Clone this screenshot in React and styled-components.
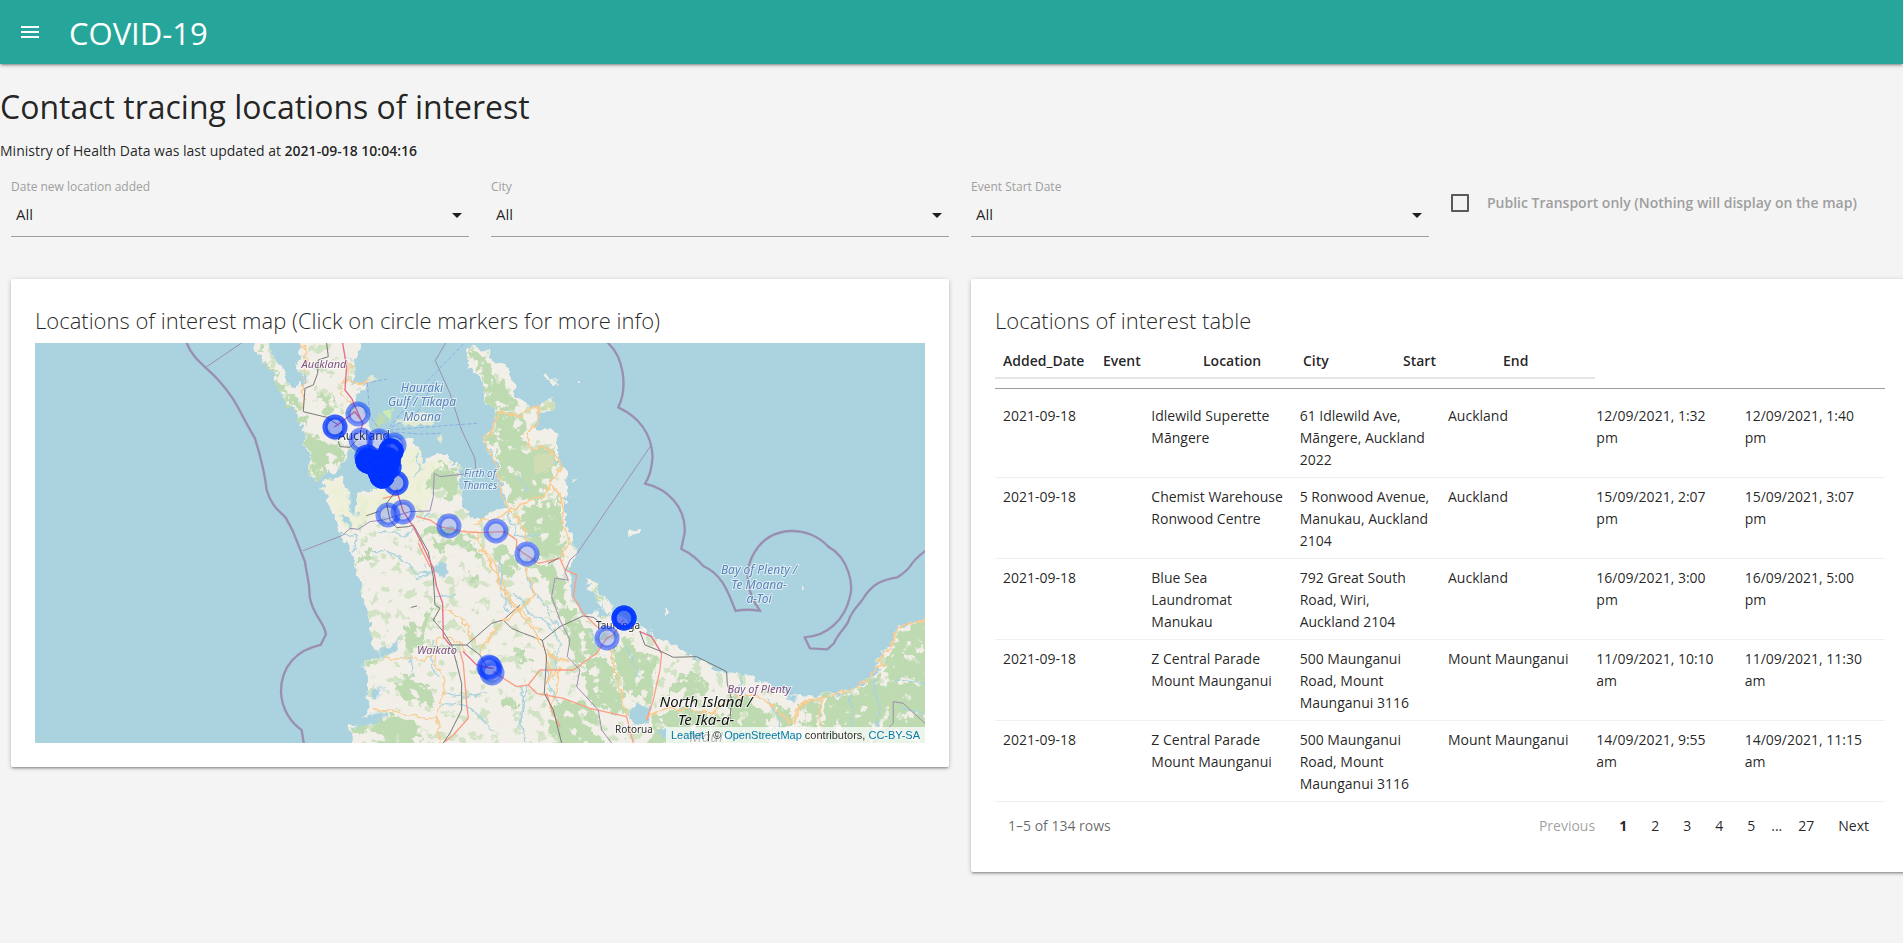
import React from 'react'
import styled, { createGlobalStyle } from 'styled-components';

const GlobalStyle = createGlobalStyle`
* {
box-sizing: border-box;
}
body {
margin: 0;
background: #f4f4f4;
color: rgba(0, 0, 0, 0.87);
font-family: "Segoe UI", "Open Sans", "Noto Sans", sans-serif;
font-size: 14px;
line-height: 22px;
overflow-x: hidden;
}
`
const Nav = styled.nav`
display: flex;
align-items: center;
gap: 27px;
height: 64px;
padding-left: 18px;
background: #26a69a;
color: #fff;
box-shadow: 0 2px 2px 0 rgba(0, 0, 0, 0.14), 0 3px 1px -2px rgba(0, 0, 0, 0.12), 0 1px 5px 0 rgba(0, 0, 0, 0.2);
`
const MenuButton = styled.button`
display: flex;
padding: 0;
border: 0;
background: none;
color: inherit;
cursor: pointer;
`
const Brand = styled.a`
padding-top: 2px;
font-size: 31px;
line-height: 62px;
color: inherit;
text-decoration: none;
`
const Main = styled.main`
padding-bottom: 32px;
`
const PageTitle = styled.h1`
margin: 24px 0 14px;
font-size: 32px;
line-height: 38px;
font-weight: 400;
`
const Updated = styled.p`
margin: 0;
line-height: 22px;
`
const Strong = styled.span`
font-weight: 600;
`
// the grid runs under the scrollbar gutter on the right
const Row = styled.div`
display: grid;
grid-template-columns: repeat(${({ $columns }) => $columns}, minmax(0, 1fr));
align-items: start;
width: calc(100% + 17px);
`
const Column = styled.div`
padding: 0 11px;
`
const Filters = styled(Row)`
margin-top: 17px;
`
const Field = styled.div`
display: flex;
flex-direction: column;
position: relative;
`
const FieldLabel = styled.label`
font-size: 12px;
line-height: 16px;
color: #9e9e9e;
`
const Select = styled.select`
appearance: none;
width: 100%;
height: 42px;
padding: 0 5px 4px;
border: 0;
border-bottom: 1px solid #9e9e9e;
border-radius: 0;
background: transparent;
color: rgba(0, 0, 0, 0.87);
font-family: inherit;
font-size: 15px;
`
const Caret = styled.svg`
position: absolute;
right: 0;
bottom: 10px;
pointer-events: none;
`
const CheckLabel = styled.label`
display: flex;
align-items: center;
gap: 18px;
margin-top: 13px;
font-weight: 600;
color: #9e9e9e;
`
const Checkbox = styled.input`
appearance: none;
flex: none;
width: 18px;
height: 18px;
margin: 0;
border: 2px solid #5a5a5a;
border-radius: 1px;
`
const Cards = styled(Row)`
margin-top: 42px;
`
const Card = styled.section`
padding: 24px;
border-radius: 2px;
background: #fff;
box-shadow: 0 2px 2px 0 rgba(0, 0, 0, 0.14), 0 3px 1px -2px rgba(0, 0, 0, 0.12), 0 1px 5px 0 rgba(0, 0, 0, 0.2);
`
const CardTitle = styled.h2`
margin: 0;
padding-bottom: 6px;
font-size: 22px;
line-height: 34px;
font-weight: 300;
`
const MapBox = styled.div`
position: relative;
height: 400px;
overflow: hidden;
background: #aad3df;
`
const MapDrawing = styled.svg`
display: block;
width: 100%;
height: 100%;
`
const MapLabel = styled.text`
font-family: "Noto Sans", sans-serif;
font-size: ${({ $size }) => $size || 11}px;
font-style: ${({ $upright }) => ($upright ? 'normal' : 'italic')};
text-anchor: middle;
fill: ${({ $color }) => $color};
stroke: rgba(255, 255, 255, 0.6);
stroke-width: 2px;
paint-order: stroke;
`
const Attribution = styled.div`
position: absolute;
right: 0;
bottom: 0;
padding: 0 5px;
background: rgba(255, 255, 255, 0.7);
color: #333;
font-family: "Liberation Sans", Arial, sans-serif;
font-size: 11px;
line-height: 16px;
`
const AttributionLink = styled.a`
color: #0078a8;
text-decoration: none;
`
const Table = styled.table`
display: block;
width: 100%;
`
const Head = styled.thead`
display: block;
padding-bottom: 9px;
margin-bottom: 8px;
border-bottom: 1px solid #9e9e9e;
`
const HeadRow = styled.tr`
display: grid;
grid-template-columns: repeat(6, 100px);
width: 600px;
border-bottom: 2px solid rgba(0, 0, 0, 0.1);
`
const HeadCell = styled.th`
padding: 7px 0 5px 8px;
text-align: left;
font-weight: 600;
line-height: 22px;
`
const Body = styled.tbody`
display: block;
`
const BodyRow = styled.tr`
display: grid;
grid-template-columns: repeat(6, minmax(0, 1fr));
border-bottom: 1px solid rgba(0, 0, 0, 0.06);
`
const Cell = styled.td`
padding: 8px 8px 6px;
`
const Pager = styled.div`
display: flex;
align-items: center;
justify-content: space-between;
padding: 9px 4px 7px 13px;
`
const PagerInfo = styled.div`
color: rgba(0, 0, 0, 0.6);
`
const Pages = styled.div`
display: flex;
align-items: center;
`
const PageButton = styled.button`
padding: 4px 12px;
border: 0;
background: none;
color: inherit;
font-family: inherit;
font-size: 14px;
line-height: 22px;
font-weight: ${({ $current }) => ($current ? 700 : 400)};
cursor: pointer;
&:disabled {
color: rgba(0, 0, 0, 0.4);
cursor: default;
}
`
const Ellipsis = styled.span`
padding: 0 4px;
`

const filters = [
    { id: 'added', label: 'Date new location added' },
    { id: 'city', label: 'City' },
    { id: 'start', label: 'Event Start Date' },
]

const columns = ['Added_Date', 'Event', 'Location', 'City', 'Start', 'End']

const rows = [
    ['2021-09-18', 'Idlewild Superette Māngere', '61 Idlewild Ave, Māngere, Auckland 2022', 'Auckland', '12/09/2021, 1:32 pm', '12/09/2021, 1:40 pm'],
    ['2021-09-18', 'Chemist Warehouse Ronwood Centre', '5 Ronwood Avenue, Manukau, Auckland 2104', 'Auckland', '15/09/2021, 2:07 pm', '15/09/2021, 3:07 pm'],
    ['2021-09-18', 'Blue Sea Laundromat Manukau', '792 Great South Road, Wiri, Auckland 2104', 'Auckland', '16/09/2021, 3:00 pm', '16/09/2021, 5:00 pm'],
    ['2021-09-18', 'Z Central Parade Mount Maunganui', '500 Maunganui Road, Mount Maunganui 3116', 'Mount Maunganui', '11/09/2021, 10:10 am', '11/09/2021, 11:30 am'],
    ['2021-09-18', 'Z Central Parade Mount Maunganui', '500 Maunganui Road, Mount Maunganui 3116', 'Mount Maunganui', '14/09/2021, 9:55 am', '14/09/2021, 11:15 am'],
]

// x, y and how many events share the spot
const markers = [
    [323, 71, 1], [300, 84, 2], [326, 97, 1], [344, 98, 1], [359, 102, 1], [332, 114, 2],
    [356, 108, 6], [353, 117, 8], [346, 119, 8], [333, 118, 8], [338, 120, 8], [354, 124, 3], [350, 126, 8],
    [347, 133, 8], [345, 128, 8], [361, 140, 2], [353, 172, 1], [368, 169, 1], [414, 183, 1],
    [461, 188, 1], [492, 211, 1], [589, 275, 4], [572, 295, 1], [454, 324, 1], [455, 325, 1], [457, 330, 1],
]

const purple = '#7d4f80'
const blue = '#5a82ba'
const labels = [
    [289, 25, 'Auckland', purple, 11],
    [387, 49, 'Hauraki', blue, 12],
    [387, 63, 'Gulf / Tīkapa', blue, 12],
    [387, 78, 'Moana', blue, 12],
    [445, 134, 'Firth of', blue, 10],
    [445, 146, 'Thames', blue, 10],
    [402, 311, 'Waikato', purple, 11],
    [724, 231, 'Bay of Plenty /', blue, 12],
    [724, 246, 'Te Moana-', blue, 12],
    [724, 260, 'a-Toi', blue, 12],
    [724, 350, 'Bay of Plenty', purple, 11],
    [671, 364, 'North Island /', '#111', 15],
    [671, 382, 'Te Ika-a-', '#111', 15],
    [671, 399, 'Māui', '#111', 15],
    [329, 97, 'Auckland', '#333', 12, true],
    [583, 286, 'Tauranga', '#333', 10, true],
    [599, 390, 'Rotorua', '#333', 10, true],
]

const westLand = [
    'M705 20 L703 60 720 85 745 120 775 165 805 215 835 265 845 295 855 350 868 390 875 440 890 447 915 432 925 420 945 428 960 405 985 375 1005 362 1040 380 1090 440 1100 470 1060 475 1035 480 1012 495 1005 545 985 500 970 460 960 445 920 448 905 455 915 490 935 530 950 570 968 610 985 650 1000 690 1005 720 1020 770 1035 820 1042 855 1055 900 1065 945 1068 965 1085 975 1060 980 1030 990 1028 1010 1040 1040 1045 1080 1040 1110 1045 1150 1020 1180 985 1183 990 1210 1005 1260 L1560 1260 1560 560 1480 535 1450 535 1410 555 1370 567 1345 550 1330 520 1320 470 1320 430 1310 400 1290 375 1260 380 1235 375 1220 400 1200 380 1190 345 1175 335 1130 335 1075 320 1060 300 1045 260 1020 230 1000 200 1012 185 1035 170 1065 150 1030 165 1000 150 1000 90 1015 75 1025 20 L833 20 840 60 835 90 850 140 850 168 805 168 800 130 760 75 738 20 Z',
    'M1335 80 L1340 60 1370 54 1400 64 1420 84 1445 99 1470 114 1470 140 1480 250 1420 230 1395 215 1395 190 1400 160 1375 135 1340 95 Z',
]

const eastLand = [
    'M-45 70 L-20 54 20 64 40 84 65 99 90 114 90 139 110 159 110 204 125 214 150 235 180 225 205 210 225 232 195 245 175 260 160 290 200 295 235 310 225 340 240 370 240 400 255 430 262 460 260 500 262 540 255 570 270 610 285 640 290 680 270 720 275 800 290 830 310 855 345 850 375 855 400 845 430 860 480 890 540 925 600 955 640 980 700 1010 740 1025 800 1035 860 1055 900 1080 940 1095 1010 1098 1060 1095 1110 1085 1160 1055 1190 1015 1195 985 1220 955 1240 935 1245 910 1265 885 1300 880 1350 868 1350 1260 -60 1260 -60 590 0 567 30 555 70 535 85 535 78 520 65 490 60 450 55 420 40 380 15 350 8 330 20 310 40 300 45 270 55 245 40 225 15 225 15 200 25 165 15 145 -20 120 -40 95 Z',
    'M315 745 L340 762 380 815 402 845 388 845 360 812 330 780 Z',
    'M345 808 L362 815 375 835 355 835 Z',
    'M550 835 L562 832 555 855 546 858 Z',
    'M200 130 L210 150 230 152 230 165 212 168 205 150 190 140 Z',
    'M452 602 L474 600 470 620 456 624 Z',
    'M965 766 L976 770 970 778 Z',
    'M285 156 L292 156 292 162 285 162 Z',
    'M290 440 L297 446 292 455 Z',
    'M850 1000 L858 1002 856 1006 Z',
]

const westForest = [
    'M706 50 L722 60 745 105 790 165 830 215 848 245 850 290 838 275 800 210 745 125 Z',
    'M850 320 L890 322 920 335 948 345 975 370 960 395 925 410 905 438 882 443 872 400 860 350 Z',
    'M900 195 L940 188 950 215 940 240 920 250 900 232 Z',
    'M1230 430 L1265 400 1310 405 1318 470 1300 510 1265 515 1240 480 1215 465 Z',
    'M1210 595 L1270 590 1330 605 1370 635 1340 650 1300 640 1270 665 1240 640 1215 645 Z',
    'M1340 620 L1380 660 1400 700 1372 700 1350 655 Z',
    'M1030 655 L1070 645 1060 675 1020 700 1000 700 Z',
    'M1245 830 L1250 870 1225 895 1205 930 1225 935 1180 960 1150 945 1165 880 1205 890 1230 850 Z',
    'M1150 1040 L1190 1035 1200 1060 1240 1095 1235 1125 1195 1120 1150 1100 1130 1065 Z',
    'M1060 1180 L1110 1150 1180 1165 1200 1200 1190 1260 1090 1260 1060 1230 Z',
    'M995 1190 L1040 1178 1045 1200 1010 1225 Z',
    'M1345 65 L1375 58 1385 100 1350 90 Z',
    'M1345 735 L1375 730 1380 760 1355 762 Z',
    'M1030 990 L1060 985 1055 1015 1030 1015 Z',
]

const eastForest = [
    'M-30 60 L0 75 35 100 50 140 75 170 105 205 110 240 70 245 20 220 15 190 25 160 -10 115 Z',
    'M55 250 L110 250 140 265 135 310 150 355 195 375 190 440 210 470 170 510 110 520 80 510 62 440 50 370 20 335 25 310 45 300 Z',
    'M155 360 L210 355 235 400 200 450 160 430 Z',
    'M190 215 L215 225 190 238 Z',
    'M120 540 L160 515 215 520 235 490 250 530 245 600 260 640 235 680 190 680 160 640 130 600 Z',
    'M55 650 L85 655 95 690 110 720 90 750 65 740 55 700 Z',
    'M140 690 L200 710 260 750 245 800 290 860 330 900 350 940 330 980 290 1010 270 960 262 900 230 840 215 780 170 740 Z',
    'M325 750 L345 775 375 820 350 800 Z',
    'M300 1010 L350 975 385 990 400 1040 430 1100 440 1150 380 1140 330 1110 300 1060 Z',
    'M210 1120 L270 1110 330 1130 360 1160 350 1200 390 1260 240 1260 210 1190 Z',
    'M400 960 L440 930 480 960 530 985 520 1040 510 1120 480 1100 430 1080 405 1020 Z',
    'M590 1040 L640 1025 680 1050 670 1095 620 1105 570 1090 Z',
    'M520 1170 L600 1130 700 1150 740 1170 735 1260 500 1260 Z',
    'M740 1110 L800 1085 840 1130 880 1200 860 1260 750 1260 Z',
    'M880 1120 L930 1130 940 1180 900 1190 Z',
    'M960 1120 L1010 1110 1015 1200 970 1190 Z',
    'M1030 1105 L1110 1095 1160 1060 1200 1015 1240 955 1250 915 1275 890 1350 875 1350 1260 1035 1260 Z',
    'M100 950 L125 962 148 985 130 1000 105 990 Z',
    'M68 1110 L95 1100 110 1130 90 1142 70 1130 Z',
]

const lakes = [
    'M1255 695 L1285 705 1285 735 1260 740 1245 715 Z',
    'M1215 700 L1225 715 1212 712 Z',
    'M1060 1070 L1085 1070 1080 1095 1060 1110 Z',
    'M1000 1190 L1040 1160 1105 1145 1085 1170 1040 1185 Z',
    'M1070 965 L1110 950 1145 920 1125 965 1095 980 Z',
    'M978 480 L995 470 1005 560 990 540 Z',
    'M965 560 L985 560 1000 600 985 590 Z',
    'M1130 480 L1160 500 1130 470 Z',
]

const eastLakes = [
    'M445 1135 L475 1128 515 1135 510 1165 495 1190 460 1185 445 1165 Z',
    'M600 1130 L640 1125 625 1150 Z',
    'M540 1200 L570 1195 575 1225 545 1230 Z',
    'M930 1095 L955 1100 945 1125 925 1110 Z',
]

const rivers = [
    'M965 610 L1010 620 1000 660 M1070 605 L1110 605 1150 620 1180 600 M1060 665 L1110 665 1150 690 1190 730 1240 725 M1235 725 L1190 750 1180 740',
    'M1245 800 L1310 795 M1240 930 L1235 1000 1250 1040 M1270 1090 L1310 1100 1370 1095 1400 1085 M1270 1120 L1330 1125 1380 1160 1420 1200 M1140 985 L1175 995 1175 1040',
    'M1440 690 L1440 780 1465 850 M1480 790 L1510 810 1525 850 1590 880 1620 950 1600 1020 M1520 1070 L1500 1170 1520 1240',
    'M1190 370 L1200 420 1180 440 M1230 545 L1210 570',
]

const eastRivers = [
    'M85 545 L90 580 115 590 105 620 180 615 M60 680 L65 770 90 830 M130 700 L150 770 200 830 225 880 240 900 M250 370 L225 400 M150 480 L110 440',
    'M200 1010 L210 1080 230 1110 M125 1070 L130 1130 120 1190 M330 900 L350 960 M440 950 L480 1040 M790 1040 L770 1090 M860 1100 L900 1170 890 1240 M1110 1095 L1120 1200 M1180 1050 L1200 1130 1190 1200 M1250 1050 L1335 1060 M1260 1130 L1335 1150',
]

const secondaryRoads = [
    'M845 39 L858 70 858 110 850 170 850 240 M985 95 L995 110 980 150 1000 160 1035 165 1045 150 M985 150 L962 165 962 195 1000 225',
    'M1060 1140 L1110 1140 1150 1155 1220 1165 1250 1165 1260 1240 M1095 980 L1130 990 1190 985 1215 990 1240 970 M1240 930 L1260 925 1290 925 1320 935 1340 965',
    'M1250 930 L1245 1000 1275 1050 1265 1110 1250 1165 M1265 840 L1310 855 1345 890 1345 915 1372 950',
    'M1365 580 L1380 575 M1330 605 L1365 608 1395 660 1420 690 1440 740 1465 800 1510 850 1560 900',
]

const eastSecondary = [
    'M180 225 L160 235 125 258 90 250 55 248 40 300 10 325 20 355 45 400 62 450 60 490 90 545 50 560 0 575',
    'M175 230 L175 280 140 310 150 355 190 350 225 375 245 410 210 460 190 500 130 520 90 545 M210 465 L240 490 250 540 245 570 268 630 245 685',
    'M90 545 L130 590 135 640 M130 700 L145 740 165 790 130 830 70 870 30 920 0 970 M0 660 L40 710 60 770 90 820 130 860 165 910 200 970 265 1000',
    'M390 960 L405 1030 430 1110 440 1160 M500 1160 L560 1135 620 1140 700 1150 740 1110 M770 1100 L820 1095 870 1120 930 1180 960 1130 1000 1105',
    'M940 1180 L975 1110 1020 1105 1020 1239 M1020 1105 L1100 1085 1165 1050 1190 1010 1215 1005 1195 990 1240 940 1245 910 1270 885 1335 872 M200 975 L210 1030 200 1060 240 1010 230 1090 210 1130',
]

const trunkRoads = [
    'M1190 560 L1230 570 1260 590 1330 605 1380 608',
    'M1195 640 L1230 710 M1320 965 L1330 1000 1335 1060 1340 1120 1345 1165 1300 1215 1275 1235 M1090 505 L1130 495',
]

const eastTrunk = [
    'M0 608 L75 605 110 630 110 655 175 700 240 685 255 720 290 735 280 800 310 850 355 895',
    'M380 925 L350 970 280 1020 180 1020 145 1065 110 1070 70 1045 40 1025 M145 1065 L170 1090 250 1105 330 1135 440 1160 460 1239 M200 1090 L215 1140 240 1190 M545 970 L540 1020 520 1110 500 1170 M430 870 L400 915 380 925',
]

const motorways = [
    'M968 39 L980 110 975 180 995 205 1010 240 1028 280 1020 310 M945 290 L975 268 1005 245 1030 280 M1130 480 L1150 545 1180 590 1205 640 1240 715 1250 770 1268 820 1270 920 1290 945 M1330 965 L1370 1005 1415 1015',
    'M1860 905 L1895 920 1925 970 M1380 1010 L1420 1015',
]

const railways = [
    'M920 39 L925 80 895 90 893 130 880 165 855 175 850 245 920 262 955 285 M955 335 L960 350 990 352 1010 330',
    'M1130 480 L1100 520 1110 570 1130 593 1165 590 1180 585 1225 665 1240 740 1245 825 1260 835 1240 870 1270 905 1295 945 1310 1000 1325 1060 1325 1140 1290 1210 1270 1239 M1290 945 L1340 945 1380 975 1400 1010 M1340 945 L1415 880 1450 870 1500 825 M1450 870 L1475 895 1510 910 1565 930 M1040 557 L1075 545 M1175 832 L1190 828',
]

const eastRailways = [
    'M187 932 L200 980 193 1090 220 1140 245 1239 M187 932 L240 890 310 858 340 862 390 900 M480 905 L495 945 545 965 580 982 650 980 740 1025 742 1060 755 1110 750 1170 M205 700 L235 685',
]

const boundaries = [
    'M500 39 C520 90 560 110 595 150 C650 210 660 250 705 325 C725 390 735 430 740 480 C755 530 780 545 797 563 L818 602 L855 695 C860 740 870 755 869 800 C880 860 910 870 918 913 L902 945 C830 960 783 1010 783 1085 C785 1140 815 1180 845 1200 L853 1250',
]

const eastBoundaries = [
    'M384 39 C430 80 445 170 415 232 C475 260 515 310 518 380 C516 410 510 440 495 461 C560 475 620 530 614 610 L604 657 C630 668 650 685 670 708 C730 735 745 790 767 843 C790 838 815 838 841 843 C800 790 790 720 825 665 C875 585 985 585 1045 650 C1110 685 1120 770 1110 800 C1095 870 1040 920 974 922 L990 955 L1042 958 L1062 940 C1075 910 1095 895 1105 875 C1115 840 1135 830 1150 805 C1175 765 1205 748 1253 742 C1270 730 1278 725 1290 710 C1305 685 1320 675 1340 660',
]

const thinBoundaries = [
    'M560 110 L665 39 M850 662 L968 616 990 595 1015 598 1050 575 1090 570 1170 545 1230 543 1240 500 1243 430 1260 440 1335 432 M1277 39 L1246 92 1290 190 1325 300 1365 385 1367 415',
]

const eastThinBoundaries = [
    'M514 345 L292 670 270 690 255 725 265 750 225 745 215 800 240 870 270 930 262 980 300 1020 290 1070 355 1140 365 1200 395 1239 M1180 1239 L1240 1180 1240 1115 1270 1120 1335 1180',
]

const ferries = [
    'M1330 42 L1225 150 1110 290 M1040 160 L1100 147 M1042 160 L1050 260 1080 300 M1100 300 L1190 250 1245 150 M1110 300 L1260 288 1370 280 M1110 305 L1200 312 1260 310',
]

const Lines = ({ paths, ...props }) => (
    <g fill="none" strokeLinejoin="round" strokeLinecap="round" {...props}>
        {paths.map((d) => <path key={d} d={d} />)}
    </g>
)

const Areas = ({ paths, ...props }) => (
    <g {...props}>
        {paths.map((d) => <path key={d} d={d} />)}
    </g>
)

const West = ({ children }) => <g transform="translate(-45 -39)">{children}</g>
const East = ({ children }) => <g transform="translate(1335 -39)">{children}</g>

const Terrain = () => (
    <g transform="scale(0.3333)">
        <g filter="url(#speckle)">
            <g filter="url(#rough)" fill="#f2efe9">
                <West><Areas paths={westLand} /></West>
                <East><Areas paths={eastLand} /></East>
            </g>
        </g>
        <g filter="url(#rough)">
            <West>
                <Areas paths={['M1140 345 L1180 345 1215 410 1290 385 1235 430 1215 465 1240 490 1230 535 1160 540 1060 560 985 610 950 555 910 460 960 450 1000 550 1015 500 1080 480 Z']} fill="#eef0d5" opacity="0.8" />
            </West>
        </g>
        <g filter="url(#patchy)" fill="#bddab1">
            <West><Areas paths={westForest} /></West>
            <East><Areas paths={eastForest} /></East>
        </g>
        <g filter="url(#rough)">
            <West>
                <Areas paths={lakes} fill="#aad3df" />
                <Areas paths={['M1095 248 L1115 238 1120 270 1105 272 Z']} fill="#cdebb0" />
                <Areas paths={['M1065 265 L1080 255 1098 270 1085 285 1070 280 Z']} fill="#bddab1" />
                <Areas paths={['M1125 278 L1150 262 1185 250 1235 250 1240 285 1215 285 1190 280 1165 290 Z', 'M1252 305 L1265 315 1262 340 1252 330 Z', 'M1035 145 L1065 140 1062 155 1040 158 Z']} fill="#e4ead2" />
            </West>
            <East>
                <Areas paths={['M160 380 L210 365 225 400 200 430 165 425 Z', 'M185 232 L215 222 225 235 195 240 Z']} fill="#d0dcb4" />
                <Areas paths={eastLakes} fill="#aad3df" />
            </East>
        </g>
        <West>
            <Lines paths={rivers} stroke="#aad3df" strokeWidth="4" filter="url(#wobble)" />
            <Lines paths={secondaryRoads} stroke="#f9cb8f" strokeWidth="4" filter="url(#wobble)" />
            <Lines paths={trunkRoads} stroke="#fa9e85" strokeWidth="4" />
            <Lines paths={railways} stroke="#777" strokeWidth="3" />
            <Lines paths={motorways} stroke="#e66e89" strokeWidth="4" />
            <Lines paths={thinBoundaries} stroke="#9d8fae" strokeWidth="3" />
            <Lines paths={boundaries} stroke="#9a8fae" strokeWidth="7" />
            <Lines paths={ferries} stroke="#7f9be6" strokeWidth="2" strokeDasharray="10 8" />
        </West>
        <East>
            <Lines paths={eastRivers} stroke="#aad3df" strokeWidth="4" filter="url(#wobble)" />
            <Lines paths={eastSecondary} stroke="#f9cb8f" strokeWidth="5" filter="url(#wobble)" />
            <Lines paths={eastTrunk} stroke="#fa9e85" strokeWidth="4" />
            <Lines paths={eastRailways} stroke="#777" strokeWidth="3" />
            <Lines paths={eastThinBoundaries} stroke="#9d8fae" strokeWidth="3" />
            <Lines paths={eastBoundaries} stroke="#9a8fae" strokeWidth="7" />
        </East>
    </g>
)

const LocationMap = () => (
    <MapBox>
        <MapDrawing viewBox="0 0 890 400" preserveAspectRatio="xMidYMid slice" role="img" aria-label="Map of locations of interest">
            <defs>
                <filter id="rough" filterUnits="userSpaceOnUse" x="0" y="0" width="2670" height="1200">
                    <feTurbulence type="fractalNoise" baseFrequency="0.03" numOctaves="4" seed="4" />
                    <feDisplacementMap in="SourceGraphic" scale="40" xChannelSelector="R" yChannelSelector="G" />
                </filter>
                <filter id="patchy" filterUnits="userSpaceOnUse" x="0" y="0" width="2670" height="1200" colorInterpolationFilters="sRGB">
                    <feTurbulence type="fractalNoise" baseFrequency="0.03" numOctaves="4" seed="4" result="noise" />
                    <feColorMatrix in="noise" values="0 0 0 0 1  0 0 0 0 1  0 0 0 0 1  0 0 14 0 -4.5" result="holes" />
                    <feDisplacementMap in="SourceGraphic" in2="noise" scale="60" xChannelSelector="R" yChannelSelector="G" result="edges" />
                    <feComposite in="edges" in2="holes" operator="in" />
                </filter>
                <filter id="wobble" filterUnits="userSpaceOnUse" x="-1400" y="0" width="4200" height="1300">
                    <feTurbulence type="fractalNoise" baseFrequency="0.04" numOctaves="2" seed="8" />
                    <feDisplacementMap in="SourceGraphic" scale="24" xChannelSelector="R" yChannelSelector="G" />
                </filter>
                <filter id="speckle" filterUnits="userSpaceOnUse" x="0" y="0" width="2670" height="1200" colorInterpolationFilters="sRGB">
                    <feTurbulence type="fractalNoise" baseFrequency="0.03" numOctaves="5" seed="11" />
                    <feColorMatrix values="0 0 0 0 0.82  0 0 0 0 0.89  0 0 0 0 0.77  14 0 0 0 -8.4" />
                    <feComposite in2="SourceGraphic" operator="in" result="patches" />
                    <feMerge>
                        <feMergeNode in="SourceGraphic" />
                        <feMergeNode in="patches" />
                    </feMerge>
                </filter>
            </defs>
            <Terrain />
            {labels.map(([x, y, text, color, size, upright]) => (
                <MapLabel key={`${text}${y}`} x={x} y={y} $color={color} $size={size} $upright={upright}>{text}</MapLabel>
            ))}
            <g fill="#03f" fillOpacity="0.2" stroke="#03f" strokeOpacity="0.5" strokeWidth="5">
                {markers.map(([x, y, count]) =>
                    Array.from({ length: count }, (_, i) => <circle key={`${x}-${y}-${i}`} cx={x} cy={y} r="10" />)
                )}
            </g>
        </MapDrawing>
        <Attribution>
            <AttributionLink href="#leaflet">Leaflet</AttributionLink> | © <AttributionLink href="#osm">OpenStreetMap</AttributionLink> contributors, <AttributionLink href="#licence">CC-BY-SA</AttributionLink>
        </Attribution>
    </MapBox>
)

const FilterSelect = ({ id, label }) => (
    <Field>
        <FieldLabel htmlFor={id}>{label}</FieldLabel>
        <Select id={id} defaultValue="All">
            <option>All</option>
        </Select>
        <Caret width="24" height="24" viewBox="0 0 24 24" aria-hidden="true">
            <path d="M7 10l5 5 5-5z" fill="rgba(0, 0, 0, 0.87)" />
        </Caret>
    </Field>
)

const LocationTable = () => (
    <Table>
        <Head>
            <HeadRow>
                {columns.map((name) => <HeadCell key={name} scope="col">{name}</HeadCell>)}
            </HeadRow>
        </Head>
        <Body>
            {rows.map((row, i) => (
                <BodyRow key={i}>
                    {row.map((value, j) => <Cell key={j}>{value}</Cell>)}
                </BodyRow>
            ))}
        </Body>
    </Table>
)

const App = () => {
    return (
        <>
            <GlobalStyle />
            <Nav>
                <MenuButton type="button" aria-label="Open menu">
                    <svg width="24" height="24" viewBox="0 0 24 24" fill="currentColor">
                        <path d="M3 18h18v-2H3v2zm0-5h18v-2H3v2zm0-7v2h18V6H3z" />
                    </svg>
                </MenuButton>
                <Brand href="#home">COVID-19</Brand>
            </Nav>
            <Main>
                <PageTitle>Contact tracing locations of interest</PageTitle>
                <Updated>Ministry of Health Data was last updated at <Strong>2021-09-18 10:04:16</Strong></Updated>
                <Filters $columns={4}>
                    {filters.map((filter) => (
                        <Column key={filter.id}>
                            <FilterSelect {...filter} />
                        </Column>
                    ))}
                    <Column>
                        <CheckLabel>
                            <Checkbox type="checkbox" />
                            Public Transport only (Nothing will display on the map)
                        </CheckLabel>
                    </Column>
                </Filters>
                <Cards $columns={2}>
                    <Column>
                        <Card>
                            <CardTitle>Locations of interest map (Click on circle markers for more info)</CardTitle>
                            <LocationMap />
                        </Card>
                    </Column>
                    <Column>
                        <Card>
                            <CardTitle>Locations of interest table</CardTitle>
                            <LocationTable />
                            <Pager>
                                <PagerInfo>1–5 of 134 rows</PagerInfo>
                                <Pages>
                                    <PageButton type="button" disabled>Previous</PageButton>
                                    <PageButton type="button" $current>1</PageButton>
                                    {[2, 3, 4, 5].map((page) => <PageButton key={page} type="button">{page}</PageButton>)}
                                    <Ellipsis>...</Ellipsis>
                                    <PageButton type="button">27</PageButton>
                                    <PageButton type="button">Next</PageButton>
                                </Pages>
                            </Pager>
                        </Card>
                    </Column>
                </Cards>
            </Main>
        </>
    )
}

export default App
